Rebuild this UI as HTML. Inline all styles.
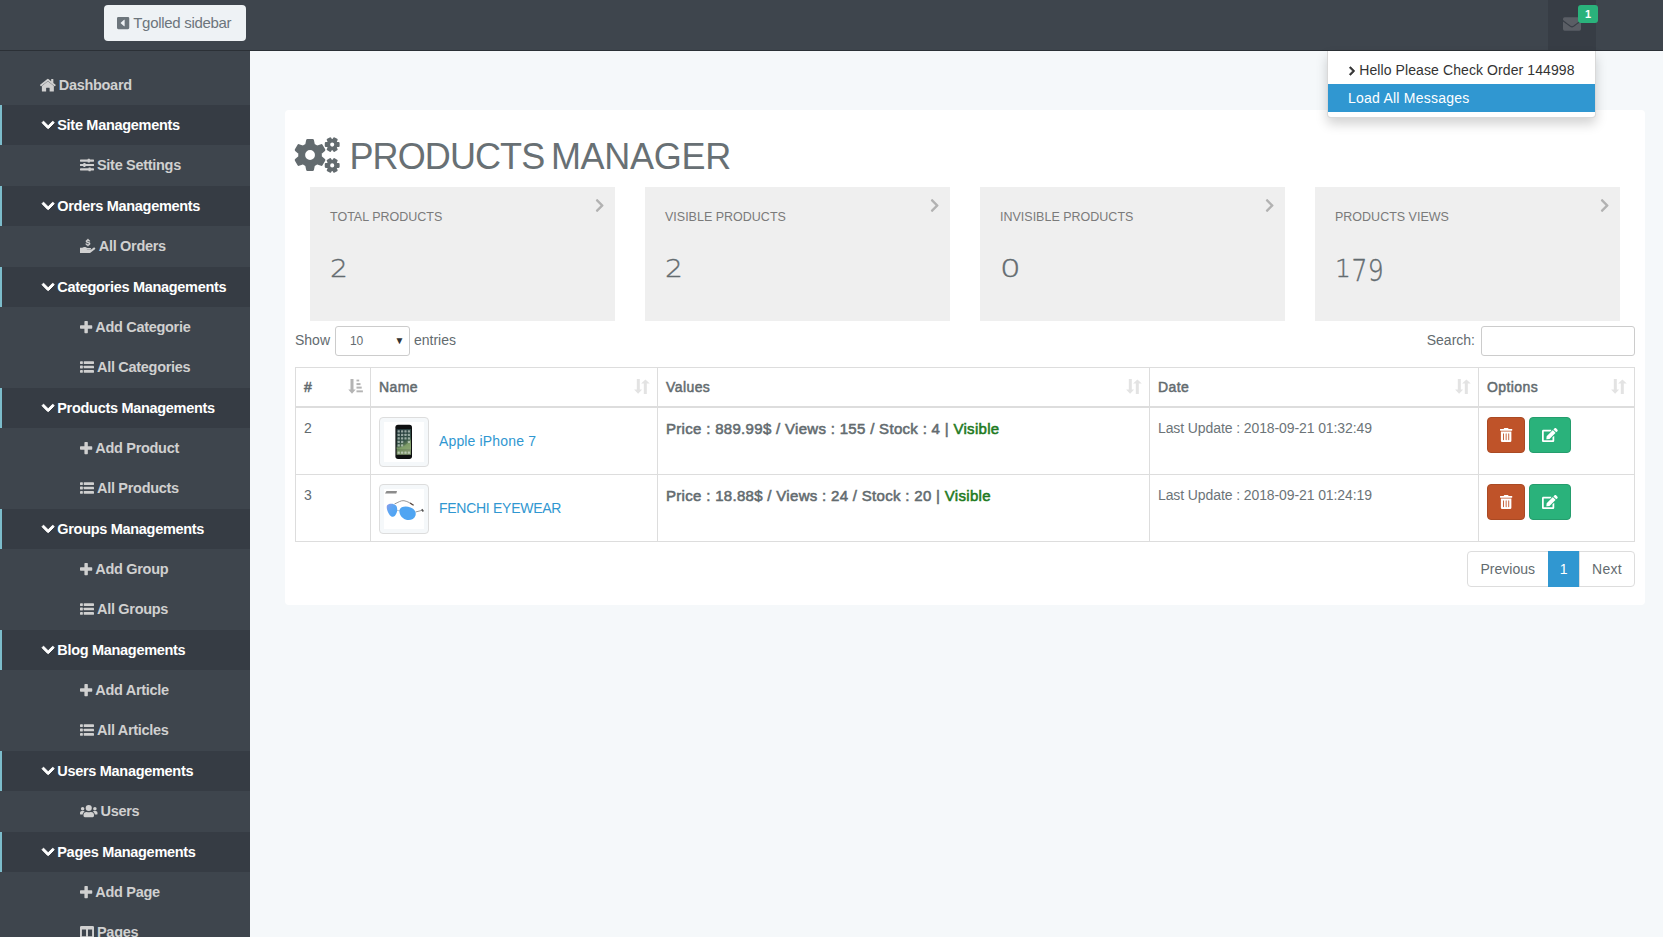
<!DOCTYPE html>
<html lang="en">
<head>
<meta charset="utf-8">
<title>Products Manager</title>
<style>
*{box-sizing:border-box}
html,body{margin:0;padding:0}
body{width:1663px;height:937px;overflow:hidden;background:#f5f8fa;color:#636b6f;font-family:"Liberation Sans",sans-serif;font-size:14px;line-height:22.4px;position:relative}
svg.ic{fill:currentColor;display:inline-block;vertical-align:-2px;overflow:visible}
a{text-decoration:none;color:inherit}
/* navbar */
.nav{position:absolute;left:0;top:0;width:1663px;height:51px;background:#3e454d;border-bottom:1px solid #2b3036}
.tg{position:absolute;left:104px;top:5px;width:142px;height:36px;background:#eef2f5;border-radius:4px;color:#6c757c;font-size:15px;letter-spacing:-.3px;line-height:36px;padding-left:13px;white-space:nowrap}
.tg svg{vertical-align:-2px;margin-right:4px}
.msg{position:absolute;left:1548px;top:0;width:48px;height:50px;background:#373d45}
.msg svg{position:absolute;left:15px;top:14.600px;color:#5a5e65}
.badge{position:absolute;left:1578px;top:5px;width:20px;height:18px;border-radius:3px;background:#2ab27b;color:#fff;font-weight:bold;font-size:11px;line-height:18px;text-align:center}
/* dropdown */
.dd{position:absolute;left:1327px;top:51px;width:269px;height:66.500px;background:#fff;border:1px solid rgba(0,0,0,.15);border-top:0;border-radius:0 0 4px 4px;box-shadow:0 6px 12px rgba(0,0,0,.175);padding-top:5px}
.dd div{height:28px;line-height:28px;padding-left:20px;white-space:nowrap;color:#333}
.dd div.act{background:#3097d1;color:#fff;letter-spacing:.23px;height:27.500px;line-height:29.500px}
.dd div svg{margin-right:4.600px;vertical-align:-.5px;margin-left:.5px}
.dd .m1{letter-spacing:.09px}
/* sidebar */
.side{position:absolute;left:0;top:51px;width:250px;height:886px;background:#3e454d;overflow:hidden}
ul{list-style:none;margin:0;padding:0}
.sb{margin-top:14px}
.sb a{display:block;height:40px;line-height:40px;padding-left:40px;color:#d0d0d0;font-weight:bold;font-size:14.5px;letter-spacing:-.3px;white-space:nowrap}
.sb a svg{margin-right:3px}
.sb li.grp{margin-bottom:1px}
.sb a.hd{background:#363c44;color:#fff;border-left:2px solid #7cbccb;padding-left:40px}
.sb li.grp ul a{padding-left:80px}
/* panel */
.panel{position:absolute;left:285px;top:110px;width:1360px;height:495px;background:#fff;border-radius:4px}
h1{position:absolute;left:10px;top:27px;margin:0;padding-left:54.500px;word-spacing:-2.500px;font-size:36px;font-weight:normal;line-height:40px;letter-spacing:-.9px;color:#687074;white-space:nowrap}
h1 span{letter-spacing:-.3px}
h1 svg.ic{position:absolute;left:0;top:0px;color:#636b6f}
.rowc{position:absolute;left:10px;top:77px;width:1340px;height:134px}
.col{float:left;width:335px;padding:0 15px}
.card{position:relative;height:134px;background:#efefef;padding:18px 20px}
.lbl{font-size:12.5px;line-height:22px;color:#7a7a7a;position:relative;top:1px}
.num{font-family:"DejaVu Sans","Liberation Sans",sans-serif;font-weight:200;font-size:25px;line-height:30px;margin-top:27px;color:#636b6f;-webkit-text-stroke:.35px #636b6f;letter-spacing:.5px}
.num span{display:inline-block;position:relative}
.num .w{transform:scaleX(1.12);transform-origin:0 50%}
.num .z{transform:scaleX(1.3);transform-origin:0 50%}
.num .d{transform:scaleY(1.24);transform-origin:0 5.400px}
/* table controls */
.len{position:absolute;left:10px;top:216px;height:30px;line-height:28px;white-space:nowrap}
.sel{display:inline-block;vertical-align:top;width:75px;height:30px;border:1px solid #ccc;border-radius:3px;margin:0 4px 0 1px;font-size:12px;line-height:28px;padding-left:14px;position:relative;background:#fff}
.sel i{position:absolute;right:4.500px;top:0;font-style:normal;font-size:10px;color:#333}
.srch{position:absolute;right:10px;top:216px;height:30px;line-height:28px;white-space:nowrap}
.srch span{display:inline-block;vertical-align:top;width:154px;height:30px;border:1px solid #ccc;border-radius:3px;margin-left:6px;background:#fff}
table{position:absolute;left:10px;top:257px;width:1340px;border-collapse:separate;border-spacing:0;border:1px solid #ddd;border-width:1px 0 0 1px;table-layout:fixed}
th,td{border:1px solid #ddd;border-width:0 1px 1px 0;padding:8px;text-align:left;vertical-align:top;white-space:nowrap}
th{font-weight:normal;-webkit-text-stroke:.5px;letter-spacing:.42px;border-bottom-width:2px;height:40.400px;position:relative;padding-right:30px}
th .sort{position:absolute;right:7.500px;top:11.400px}
td{height:67px;line-height:23.500px;padding:9px 8px 7px}
.thumb{display:inline-block;width:50px;height:50px;border:1px solid #ddd;border-radius:4px;padding:4px;background:#f5f8fa;vertical-align:middle}
.thumb svg{display:block}
.plink{color:#3097d1;margin-left:10px;vertical-align:middle;position:relative;top:-.5px}
.ls1{letter-spacing:.15px}.ls2{letter-spacing:-.28px}
.c2 b{font-size:15px;font-weight:normal;-webkit-text-stroke:.55px;letter-spacing:.31px;position:relative;top:-.7px}
.vis{color:#1e7a1e}
.c3{letter-spacing:-.1px;color:#6c7478}
.btn{display:inline-block;height:36px;border-radius:4px;padding:6px 12px;color:#fff;border:1px solid;vertical-align:top}
.bd{background:#bf5329;border-color:#aa4a24;margin-right:4px}
.bs{background:#2ab27b;border-color:#259d6d}
.pg{position:absolute;right:10px;top:441px;height:36px;display:flex}
.pg span{display:block;height:36px;line-height:34px;padding:0;text-align:center;border:1px solid #ddd;margin-left:-1px;background:#fff}
.pg .p1{width:81.500px}.pg .p2{width:32.500px}.pg .p3{width:56px;letter-spacing:.3px}
.pg span:first-child{border-radius:4px 0 0 4px}
.pg span:last-child{border-radius:0 4px 4px 0}
.pg span.on{background:#3097d1;border-color:#3097d1;color:#fff}
</style>
</head>
<body>
<div class="side">
<ul class="sb">
<li class="top"><a><svg class="ic " viewBox="0 0 576 512" width="15.75" height="14" style="" aria-hidden="true"><path d="M288 115 L69 295 V480 a16 16 0 0 0 16 16 H224 V368 a16 16 0 0 1 16-16 h96 a16 16 0 0 1 16 16 V496 H491 a16 16 0 0 0 16-16 V295 Z"/><path d="M571 251 L488 183 V48 a12 12 0 0 0 -12-12 h-56 a12 12 0 0 0 -12 12 v69 L318 43 a48 48 0 0 0 -61 0 L4 251 a12 12 0 0 0 -2 17 l26 31 a12 12 0 0 0 17 2 L288 107 l243 194 a12 12 0 0 0 17-2 l26-31 a12 12 0 0 0 -3-17z"/></svg><span>Dashboard</span></a></li>
<li class="grp"><a class="hd"><svg class="ic " viewBox="0 0 448 512" width="12.25" height="14" style="" aria-hidden="true"><path stroke="currentColor" stroke-width="36" stroke-linejoin="round" d="M207.029 381.476L12.686 187.132c-9.373-9.373-9.373-24.569 0-33.941l22.667-22.667c9.357-9.357 24.522-9.375 33.901-.04L224 284.505l154.745-154.021c9.379-9.335 24.544-9.317 33.901.04l22.667 22.667c9.373 9.373 9.373 24.569 0 33.941L240.971 381.476c-9.373 9.372-24.569 9.372-33.942 0z"/></svg><span>Site Managements</span></a><ul>
<li><a><svg class="ic " viewBox="0 0 512 512" width="14" height="14" style="" aria-hidden="true"><rect x="0" y="56" width="512" height="80" rx="16"/><rect x="0" y="216" width="512" height="80" rx="16"/><rect x="0" y="376" width="512" height="80" rx="16"/><rect x="280" y="24" width="80" height="144" rx="16"/><rect x="120" y="184" width="80" height="144" rx="16"/><rect x="312" y="344" width="80" height="144" rx="16"/></svg><span>Site Settings</span></a></li>
</ul></li>
<li class="grp"><a class="hd"><svg class="ic " viewBox="0 0 448 512" width="12.25" height="14" style="" aria-hidden="true"><path stroke="currentColor" stroke-width="36" stroke-linejoin="round" d="M207.029 381.476L12.686 187.132c-9.373-9.373-9.373-24.569 0-33.941l22.667-22.667c9.357-9.357 24.522-9.375 33.901-.04L224 284.505l154.745-154.021c9.379-9.335 24.544-9.317 33.901.04l22.667 22.667c9.373 9.373 9.373 24.569 0 33.941L240.971 381.476c-9.373 9.372-24.569 9.372-33.942 0z"/></svg><span>Orders Managements</span></a><ul>
<li><a><svg class="ic " viewBox="0 0 576 512" width="15.75" height="14" style="" aria-hidden="true"><path d="M0 322 h84 c44-32 104-32 146-8 l44 12 h104 c40 0 40 58 0 58 h-124 l-8 12 h150 l106-82 c40-26 78 28 44 58 L404 480 c-24 22-46 32-78 32 H0z"/><path stroke="currentColor" stroke-width="14" d="M272 0 h36 v28 c34 4 54 24 58 54 h-40 c-4-14-16-20-36-20 c-20 0-30 8-30 20 c0 12 10 16 40 24 c44 10 72 24 72 64 c0 32-24 54-64 60 v30 h-36 v-30 c-38-4-62-26-66-60 h40 c4 18 20 26 44 26 c24 0 38-8 38-24 c0-14-12-20-44-28 c-44-10-68-26-68-62 c0-30 24-50 56-56z"/></svg><span>All Orders</span></a></li>
</ul></li>
<li class="grp"><a class="hd"><svg class="ic " viewBox="0 0 448 512" width="12.25" height="14" style="" aria-hidden="true"><path stroke="currentColor" stroke-width="36" stroke-linejoin="round" d="M207.029 381.476L12.686 187.132c-9.373-9.373-9.373-24.569 0-33.941l22.667-22.667c9.357-9.357 24.522-9.375 33.901-.04L224 284.505l154.745-154.021c9.379-9.335 24.544-9.317 33.901.04l22.667 22.667c9.373 9.373 9.373 24.569 0 33.941L240.971 381.476c-9.373 9.372-24.569 9.372-33.942 0z"/></svg><span>Categories Managements</span></a><ul>
<li><a><svg class="ic " viewBox="0 0 448 512" width="12.25" height="14" style="" aria-hidden="true"><path d="M448 294.2v-76.4c0-13.3-10.7-24-24-24H286.2V56c0-13.3-10.7-24-24-24h-76.4c-13.3 0-24 10.7-24 24v137.8H24c-13.3 0-24 10.7-24 24v76.4c0 13.3 10.7 24 24 24h137.8V456c0 13.3 10.7 24 24 24h76.4c13.3 0 24-10.7 24-24V318.2H424c13.3 0 24-10.7 24-24z"/></svg><span>Add Categorie</span></a></li>
<li><a><svg class="ic " viewBox="0 0 512 512" width="14" height="14" style="" aria-hidden="true"><rect x="0" y="44" width="104" height="104" rx="16"/><rect x="136" y="48" width="376" height="96" rx="16"/><rect x="0" y="204" width="104" height="104" rx="16"/><rect x="136" y="208" width="376" height="96" rx="16"/><rect x="0" y="364" width="104" height="104" rx="16"/><rect x="136" y="368" width="376" height="96" rx="16"/></svg><span>All Categories</span></a></li>
</ul></li>
<li class="grp"><a class="hd"><svg class="ic " viewBox="0 0 448 512" width="12.25" height="14" style="" aria-hidden="true"><path stroke="currentColor" stroke-width="36" stroke-linejoin="round" d="M207.029 381.476L12.686 187.132c-9.373-9.373-9.373-24.569 0-33.941l22.667-22.667c9.357-9.357 24.522-9.375 33.901-.04L224 284.505l154.745-154.021c9.379-9.335 24.544-9.317 33.901.04l22.667 22.667c9.373 9.373 9.373 24.569 0 33.941L240.971 381.476c-9.373 9.372-24.569 9.372-33.942 0z"/></svg><span>Products Managements</span></a><ul>
<li><a><svg class="ic " viewBox="0 0 448 512" width="12.25" height="14" style="" aria-hidden="true"><path d="M448 294.2v-76.4c0-13.3-10.7-24-24-24H286.2V56c0-13.3-10.7-24-24-24h-76.4c-13.3 0-24 10.7-24 24v137.8H24c-13.3 0-24 10.7-24 24v76.4c0 13.3 10.7 24 24 24h137.8V456c0 13.3 10.7 24 24 24h76.4c13.3 0 24-10.7 24-24V318.2H424c13.3 0 24-10.7 24-24z"/></svg><span>Add Product</span></a></li>
<li><a><svg class="ic " viewBox="0 0 512 512" width="14" height="14" style="" aria-hidden="true"><rect x="0" y="44" width="104" height="104" rx="16"/><rect x="136" y="48" width="376" height="96" rx="16"/><rect x="0" y="204" width="104" height="104" rx="16"/><rect x="136" y="208" width="376" height="96" rx="16"/><rect x="0" y="364" width="104" height="104" rx="16"/><rect x="136" y="368" width="376" height="96" rx="16"/></svg><span>All Products</span></a></li>
</ul></li>
<li class="grp"><a class="hd"><svg class="ic " viewBox="0 0 448 512" width="12.25" height="14" style="" aria-hidden="true"><path stroke="currentColor" stroke-width="36" stroke-linejoin="round" d="M207.029 381.476L12.686 187.132c-9.373-9.373-9.373-24.569 0-33.941l22.667-22.667c9.357-9.357 24.522-9.375 33.901-.04L224 284.505l154.745-154.021c9.379-9.335 24.544-9.317 33.901.04l22.667 22.667c9.373 9.373 9.373 24.569 0 33.941L240.971 381.476c-9.373 9.372-24.569 9.372-33.942 0z"/></svg><span>Groups Managements</span></a><ul>
<li><a><svg class="ic " viewBox="0 0 448 512" width="12.25" height="14" style="" aria-hidden="true"><path d="M448 294.2v-76.4c0-13.3-10.7-24-24-24H286.2V56c0-13.3-10.7-24-24-24h-76.4c-13.3 0-24 10.7-24 24v137.8H24c-13.3 0-24 10.7-24 24v76.4c0 13.3 10.7 24 24 24h137.8V456c0 13.3 10.7 24 24 24h76.4c13.3 0 24-10.7 24-24V318.2H424c13.3 0 24-10.7 24-24z"/></svg><span>Add Group</span></a></li>
<li><a><svg class="ic " viewBox="0 0 512 512" width="14" height="14" style="" aria-hidden="true"><rect x="0" y="44" width="104" height="104" rx="16"/><rect x="136" y="48" width="376" height="96" rx="16"/><rect x="0" y="204" width="104" height="104" rx="16"/><rect x="136" y="208" width="376" height="96" rx="16"/><rect x="0" y="364" width="104" height="104" rx="16"/><rect x="136" y="368" width="376" height="96" rx="16"/></svg><span>All Groups</span></a></li>
</ul></li>
<li class="grp"><a class="hd"><svg class="ic " viewBox="0 0 448 512" width="12.25" height="14" style="" aria-hidden="true"><path stroke="currentColor" stroke-width="36" stroke-linejoin="round" d="M207.029 381.476L12.686 187.132c-9.373-9.373-9.373-24.569 0-33.941l22.667-22.667c9.357-9.357 24.522-9.375 33.901-.04L224 284.505l154.745-154.021c9.379-9.335 24.544-9.317 33.901.04l22.667 22.667c9.373 9.373 9.373 24.569 0 33.941L240.971 381.476c-9.373 9.372-24.569 9.372-33.942 0z"/></svg><span>Blog Managements</span></a><ul>
<li><a><svg class="ic " viewBox="0 0 448 512" width="12.25" height="14" style="" aria-hidden="true"><path d="M448 294.2v-76.4c0-13.3-10.7-24-24-24H286.2V56c0-13.3-10.7-24-24-24h-76.4c-13.3 0-24 10.7-24 24v137.8H24c-13.3 0-24 10.7-24 24v76.4c0 13.3 10.7 24 24 24h137.8V456c0 13.3 10.7 24 24 24h76.4c13.3 0 24-10.7 24-24V318.2H424c13.3 0 24-10.7 24-24z"/></svg><span>Add Article</span></a></li>
<li><a><svg class="ic " viewBox="0 0 512 512" width="14" height="14" style="" aria-hidden="true"><rect x="0" y="44" width="104" height="104" rx="16"/><rect x="136" y="48" width="376" height="96" rx="16"/><rect x="0" y="204" width="104" height="104" rx="16"/><rect x="136" y="208" width="376" height="96" rx="16"/><rect x="0" y="364" width="104" height="104" rx="16"/><rect x="136" y="368" width="376" height="96" rx="16"/></svg><span>All Articles</span></a></li>
</ul></li>
<li class="grp"><a class="hd"><svg class="ic " viewBox="0 0 448 512" width="12.25" height="14" style="" aria-hidden="true"><path stroke="currentColor" stroke-width="36" stroke-linejoin="round" d="M207.029 381.476L12.686 187.132c-9.373-9.373-9.373-24.569 0-33.941l22.667-22.667c9.357-9.357 24.522-9.375 33.901-.04L224 284.505l154.745-154.021c9.379-9.335 24.544-9.317 33.901.04l22.667 22.667c9.373 9.373 9.373 24.569 0 33.941L240.971 381.476c-9.373 9.372-24.569 9.372-33.942 0z"/></svg><span>Users Managements</span></a><ul>
<li><a><svg class="ic " viewBox="0 0 640 512" width="17.5" height="14" style="" aria-hidden="true"><circle cx="96" cy="176" r="64"/><circle cx="544" cy="176" r="64"/><circle cx="320" cy="144" r="112"/><path d="M0 320 a64 64 0 0 1 64-64 h64 a64 64 0 0 1 45 19 c-40 22-69 62-75 109 H32 a32 32 0 0 1 -32-32z"/><path d="M640 320 a64 64 0 0 0 -64-64 h-64 a64 64 0 0 0 -45 19 c40 22 69 62 75 109 H608 a32 32 0 0 0 32-32z"/><path d="M128 403 a115 115 0 0 1 115-115 h8 a160 160 0 0 0 138 0 h8 a115 115 0 0 1 115 115 V432 a48 48 0 0 1 -48 48 H176 a48 48 0 0 1 -48-48z"/></svg><span>Users</span></a></li>
</ul></li>
<li class="grp"><a class="hd"><svg class="ic " viewBox="0 0 448 512" width="12.25" height="14" style="" aria-hidden="true"><path stroke="currentColor" stroke-width="36" stroke-linejoin="round" d="M207.029 381.476L12.686 187.132c-9.373-9.373-9.373-24.569 0-33.941l22.667-22.667c9.357-9.357 24.522-9.375 33.901-.04L224 284.505l154.745-154.021c9.379-9.335 24.544-9.317 33.901.04l22.667 22.667c9.373 9.373 9.373 24.569 0 33.941L240.971 381.476c-9.373 9.372-24.569 9.372-33.942 0z"/></svg><span>Pages Managements</span></a><ul>
<li><a><svg class="ic " viewBox="0 0 448 512" width="12.25" height="14" style="" aria-hidden="true"><path d="M448 294.2v-76.4c0-13.3-10.7-24-24-24H286.2V56c0-13.3-10.7-24-24-24h-76.4c-13.3 0-24 10.7-24 24v137.8H24c-13.3 0-24 10.7-24 24v76.4c0 13.3 10.7 24 24 24h137.8V456c0 13.3 10.7 24 24 24h76.4c13.3 0 24-10.7 24-24V318.2H424c13.3 0 24-10.7 24-24z"/></svg><span>Add Page</span></a></li>
<li><a><svg class="ic " viewBox="0 0 512 512" width="14" height="14" style="" aria-hidden="true"><path fill-rule="evenodd" d="M464 32 H48 A48 48 0 0 0 0 80 v352 a48 48 0 0 0 48 48 h416 a48 48 0 0 0 48-48 V80 a48 48 0 0 0 -48-48z M220 412 H70 V166 h150z M442 412 H292 V166 h150z"/></svg><span>Pages</span></a></li>
</ul></li>
</ul>
</div>
<div class="panel">
<h1><svg class="ic " viewBox="0 0 640 512" width="45" height="36" style="" aria-hidden="true"><path fill-rule="evenodd" stroke-linejoin="round" stroke-width="36" stroke="currentColor" d="M265.5 399.0 L251.5 464.6 L176.5 464.6 L162.5 399.0 L115.9 372.1 L52.1 392.8 L14.5 327.8 L64.4 282.9 L64.4 229.1 L14.5 184.2 L52.1 119.2 L115.9 139.9 L162.5 113.0 L176.5 47.4 L251.5 47.4 L265.5 113.0 L312.1 139.9 L375.9 119.2 L413.5 184.2 L363.6 229.1 L363.6 282.9 L413.5 327.8 L375.9 392.8 L312.1 372.1Z M126.0 256.0 a88 88 0 1 0 176 0 a88 88 0 1 0 -176 0Z"/><path fill-rule="evenodd" stroke-linejoin="round" stroke-width="30" stroke="currentColor" d="M590.6 87.3 L619.8 87.7 L619.8 128.3 L590.6 128.7 L577.8 151.0 L591.9 176.5 L556.8 196.7 L541.8 171.7 L516.2 171.7 L501.2 196.7 L466.1 176.5 L480.2 151.0 L467.4 128.7 L438.2 128.3 L438.2 87.7 L467.4 87.3 L480.2 65.0 L466.1 39.5 L501.2 19.3 L516.2 44.3 L541.8 44.3 L556.8 19.3 L591.9 39.5 L577.8 65.0Z M485.0 108.0 a44 44 0 1 0 88 0 a44 44 0 1 0 -88 0Z M590.6 383.3 L619.8 383.7 L619.8 424.3 L590.6 424.7 L577.8 447.0 L591.9 472.5 L556.8 492.7 L541.8 467.7 L516.2 467.7 L501.2 492.7 L466.1 472.5 L480.2 447.0 L467.4 424.7 L438.2 424.3 L438.2 383.7 L467.4 383.3 L480.2 361.0 L466.1 335.5 L501.2 315.3 L516.2 340.3 L541.8 340.3 L556.8 315.3 L591.9 335.5 L577.8 361.0Z M485.0 404.0 a44 44 0 1 0 88 0 a44 44 0 1 0 -88 0Z"/></svg>PRODUCTS <span>MANAGER</span></h1>
<div class="rowc"><div class="col"><div class="card"><svg class="ic " viewBox="0 0 320 512" width="9.4" height="15" style="position:absolute;right:10.5px;top:10.5px;color:#b2b2b2" aria-hidden="true"><path d="M285.476 272.971L91.132 467.314c-9.373 9.373-24.569 9.373-33.941 0l-22.667-22.667c-9.357-9.357-9.375-24.522-.04-33.901L188.505 256 34.484 101.255c-9.335-9.379-9.317-24.544.04-33.901l22.667-22.667c9.373-9.373 24.569-9.373 33.941 0L285.475 239.03c9.373 9.372 9.373 24.568.001 33.941z"/></svg><div class="lbl">TOTAL PRODUCTS</div><div class="num"><span class="w">2</span></div></div></div><div class="col"><div class="card"><svg class="ic " viewBox="0 0 320 512" width="9.4" height="15" style="position:absolute;right:10.5px;top:10.5px;color:#b2b2b2" aria-hidden="true"><path d="M285.476 272.971L91.132 467.314c-9.373 9.373-24.569 9.373-33.941 0l-22.667-22.667c-9.357-9.357-9.375-24.522-.04-33.901L188.505 256 34.484 101.255c-9.335-9.379-9.317-24.544.04-33.901l22.667-22.667c9.373-9.373 24.569-9.373 33.941 0L285.475 239.03c9.373 9.372 9.373 24.568.001 33.941z"/></svg><div class="lbl">VISIBLE PRODUCTS</div><div class="num"><span class="w">2</span></div></div></div><div class="col"><div class="card"><svg class="ic " viewBox="0 0 320 512" width="9.4" height="15" style="position:absolute;right:10.5px;top:10.5px;color:#b2b2b2" aria-hidden="true"><path d="M285.476 272.971L91.132 467.314c-9.373 9.373-24.569 9.373-33.941 0l-22.667-22.667c-9.357-9.357-9.375-24.522-.04-33.901L188.505 256 34.484 101.255c-9.335-9.379-9.317-24.544.04-33.901l22.667-22.667c9.373-9.373 24.569-9.373 33.941 0L285.475 239.03c9.373 9.372 9.373 24.568.001 33.941z"/></svg><div class="lbl">INVISIBLE PRODUCTS</div><div class="num"><span class="z">0</span></div></div></div><div class="col"><div class="card"><svg class="ic " viewBox="0 0 320 512" width="9.4" height="15" style="position:absolute;right:10.5px;top:10.5px;color:#b2b2b2" aria-hidden="true"><path d="M285.476 272.971L91.132 467.314c-9.373 9.373-24.569 9.373-33.941 0l-22.667-22.667c-9.357-9.357-9.375-24.522-.04-33.901L188.505 256 34.484 101.255c-9.335-9.379-9.317-24.544.04-33.901l22.667-22.667c9.373-9.373 24.569-9.373 33.941 0L285.475 239.03c9.373 9.372 9.373 24.568.001 33.941z"/></svg><div class="lbl">PRODUCTS VIEWS</div><div class="num">1<span class="d">79</span></div></div></div></div>
<div class="len">Show <span class="sel">10<i>&#9660;</i></span>entries</div>
<div class="srch">Search:<span></span></div>
<table>
<colgroup><col style="width:75px"><col style="width:287px"><col style="width:492px"><col style="width:329px"><col style="width:156px"></colgroup>
<thead><tr><th>#<svg class="sort" viewBox="0 0 15 15" width="15" height="15" style="fill:#b4b4b4"><rect x="2.500" y="0" width="3" height="11.600"/><path d="M0.300 10.600 H7.700 L4 14.800Z"/><rect x="8.500" y="0.600" width="2.700" height="1.800"/><rect x="8.500" y="4.100" width="4" height="2"/><rect x="8.500" y="7.600" width="5.200" height="2"/><rect x="8.500" y="11.400" width="6.400" height="1.900"/></svg></th><th>Name<svg class="sort" viewBox="0 0 16 15" width="16" height="15" style="fill:#e3e3e3;right:7px"><rect x="2.800" y="0" width="3" height="11.600"/><path d="M0.1 10.600 H8.100 L4.100 14.800Z"/><rect x="9.800" y="3.600" width="3" height="11.400"/><path d="M7.100 4.600 H15.800 L11.400 0.400Z"/></svg></th><th>Values<svg class="sort" viewBox="0 0 16 15" width="16" height="15" style="fill:#e3e3e3;right:7px"><rect x="2.800" y="0" width="3" height="11.600"/><path d="M0.1 10.600 H8.100 L4.100 14.800Z"/><rect x="9.800" y="3.600" width="3" height="11.400"/><path d="M7.100 4.600 H15.800 L11.400 0.400Z"/></svg></th><th>Date<svg class="sort" viewBox="0 0 16 15" width="16" height="15" style="fill:#e3e3e3;right:7px"><rect x="2.800" y="0" width="3" height="11.600"/><path d="M0.1 10.600 H8.100 L4.100 14.800Z"/><rect x="9.800" y="3.600" width="3" height="11.400"/><path d="M7.100 4.600 H15.800 L11.400 0.400Z"/></svg></th><th>Options<svg class="sort" viewBox="0 0 16 15" width="16" height="15" style="fill:#e3e3e3;right:7px"><rect x="2.800" y="0" width="3" height="11.600"/><path d="M0.1 10.600 H8.100 L4.100 14.800Z"/><rect x="9.800" y="3.600" width="3" height="11.400"/><path d="M7.100 4.600 H15.800 L11.400 0.400Z"/></svg></th></tr></thead>
<tbody>
<tr><td class="c0">2</td><td class="c1"><span class="thumb"><svg width="40" height="40" viewBox="0 0 40 40"><defs><linearGradient id="scr" x1="0" y1="0" x2="0.300" y2="1"><stop offset="0" stop-color="#22353b"/><stop offset=".55" stop-color="#355248"/><stop offset=".8" stop-color="#6f8c5c"/><stop offset="1" stop-color="#7f946c"/></linearGradient></defs><rect width="40" height="40" fill="#fff"/><rect x="11.400" y="2.700" width="16.600" height="34.200" rx="2.600" fill="#0e1011"/><rect x="12.600" y="7" width="14.400" height="25.800" fill="url(#scr)"/><path d="M12.600 25 C17 27 22 23 27 17.500 V27 H12.600Z" fill="#9ab87c" opacity=".45"/><g fill="#dfe9e2" opacity=".6"><rect x="13.6" y="8.2" width="2.200" height="2.200" rx=".5"/><rect x="17.0" y="8.2" width="2.200" height="2.200" rx=".5"/><rect x="20.4" y="8.2" width="2.200" height="2.200" rx=".5"/><rect x="23.8" y="8.2" width="2.200" height="2.200" rx=".5"/><rect x="13.6" y="11.7" width="2.200" height="2.200" rx=".5"/><rect x="17.0" y="11.7" width="2.200" height="2.200" rx=".5"/><rect x="20.4" y="11.7" width="2.200" height="2.200" rx=".5"/><rect x="23.8" y="11.7" width="2.200" height="2.200" rx=".5"/><rect x="13.6" y="15.2" width="2.200" height="2.200" rx=".5"/><rect x="17.0" y="15.2" width="2.200" height="2.200" rx=".5"/><rect x="20.4" y="15.2" width="2.200" height="2.200" rx=".5"/><rect x="23.8" y="15.2" width="2.200" height="2.200" rx=".5"/><rect x="13.6" y="18.7" width="2.200" height="2.200" rx=".5"/><rect x="17.0" y="18.7" width="2.200" height="2.200" rx=".5"/><rect x="23.8" y="18.7" width="2.200" height="2.200" rx=".5"/><rect x="13.6" y="22.2" width="2.200" height="2.200" rx=".5"/><rect x="17.0" y="22.2" width="2.200" height="2.200" rx=".5"/><rect x="13.6" y="29.600" width="2.200" height="2.200" rx=".5"/><rect x="17.0" y="29.600" width="2.200" height="2.200" rx=".5"/><rect x="20.4" y="29.600" width="2.200" height="2.200" rx=".5"/><rect x="23.8" y="29.600" width="2.200" height="2.200" rx=".5"/></g></svg></span><a class="plink ls1">Apple iPhone 7</a></td>
<td class="c2"><b>Price : 889.99$ / Views : 155 / Stock : 4 | </b><b class="vis">Visible</b></td><td class="c3">Last Update : 2018-09-21 01:32:49</td>
<td class="c4"><a class="btn bd"><svg class="ic " viewBox="0 0 448 512" width="12.25" height="14" style="" aria-hidden="true"><path fill-rule="evenodd" d="M32 464 a48 48 0 0 0 48 48 h288 a48 48 0 0 0 48-48 V128 H32z M304 208 a16 16 0 0 1 32 0 v224 a16 16 0 0 1 -32 0z M208 208 a16 16 0 0 1 32 0 v224 a16 16 0 0 1 -32 0z M112 208 a16 16 0 0 1 32 0 v224 a16 16 0 0 1 -32 0z"/><path d="M432 32 H312 l-9-19 A24 24 0 0 0 281 0 H167 a24 24 0 0 0 -22 13 l-9 19 H16 A16 16 0 0 0 0 48 v32 a16 16 0 0 0 16 16 h416 a16 16 0 0 0 16-16 V48 a16 16 0 0 0 -16-16z"/></svg></a><a class="btn bs"><svg class="ic " viewBox="0 0 576 512" width="15.75" height="14" style="" aria-hidden="true"><path d="M402.600 83.200 l90.200 90.200 c3.800 3.800 3.800 10 0 13.800 L274.400 405.600 l-92.800 10.300 c-12.400 1.400-22.900-9.100-21.500-21.500 l10.300-92.800 L388.800 83.200 c3.800-3.800 10-3.800 13.800 0z"/><path d="M564.600 60.200 l-48.800-48.800 c-15.200-15.200-39.900-15.200-55.200 0 l-35.400 35.400 c-3.800 3.800-3.800 10 0 13.800 l90.200 90.200 c3.800 3.800 10 3.800 13.800 0 l35.400-35.400 c15.200-15.300 15.200-40 0-55.200z"/><path d="M384 346.200 V448 H64 V128 h229.800 c3.200 0 6.200-1.300 8.500-3.500 l40-40 c7.600-7.600 2.200-20.500-8.500-20.500 H48 C21.500 64 0 85.500 0 112 v352 c0 26.500 21.500 48 48 48 h352 c26.500 0 48-21.500 48-48 V306.200 c0-10.700-12.900-16-20.500-8.500 l-40 40 c-2.200 2.300-3.500 5.300-3.500 8.500z"/></svg></a></td></tr><tr><td class="c0">3</td><td class="c1"><span class="thumb"><svg width="40" height="40" viewBox="0 0 40 40"><defs><linearGradient id="ln" x1="0" y1="0" x2="1" y2="1"><stop offset="0" stop-color="#8f9be8"/><stop offset=".4" stop-color="#5ea6f3"/><stop offset="1" stop-color="#49a3f2"/></linearGradient></defs><rect width="40" height="40" fill="#fff"/><path d="M1 4.600 L2.500 2 H13 L12.300 4.600Z" fill="#666" opacity=".75"/><path d="M10.500 15 C14 13.500 17 11.200 20 11.700 C24 12.500 27 14.500 29.500 16.200" fill="none" stroke="#8b8b8b" stroke-width=".9"/><path d="M26 14 L29.500 16.300" stroke="#5b4a42" stroke-width="1.300"/><path d="M13 21.500 L16 21.800" stroke="#aaa" stroke-width=".7"/><path d="M31.500 23 L38.500 21.200" stroke="#999" stroke-width="1"/><path d="M37.800 20.200 L39.300 22.500" stroke="#555" stroke-width="1.600"/><path d="M3 16.500 C4.500 14 9.500 14 12 16.500 C14 19 13.500 24 11 26.800 C9 29 6.500 27.500 5 25 C3.200 22 2.200 18.500 3 16.500Z" fill="url(#ln)"/><path d="M15.500 21 C16.500 17.500 22 16.800 26.500 18.500 C30.500 20 32.500 23 31.500 26.500 C30.300 30.500 25.500 32 21.500 30.500 C17.500 29 14.800 25 15.500 21Z" fill="#4fa5f2"/></svg></span><a class="plink ls2">FENCHI EYEWEAR</a></td>
<td class="c2"><b>Price : 18.88$ / Views : 24 / Stock : 20 | </b><b class="vis">Visible</b></td><td class="c3">Last Update : 2018-09-21 01:24:19</td>
<td class="c4"><a class="btn bd"><svg class="ic " viewBox="0 0 448 512" width="12.25" height="14" style="" aria-hidden="true"><path fill-rule="evenodd" d="M32 464 a48 48 0 0 0 48 48 h288 a48 48 0 0 0 48-48 V128 H32z M304 208 a16 16 0 0 1 32 0 v224 a16 16 0 0 1 -32 0z M208 208 a16 16 0 0 1 32 0 v224 a16 16 0 0 1 -32 0z M112 208 a16 16 0 0 1 32 0 v224 a16 16 0 0 1 -32 0z"/><path d="M432 32 H312 l-9-19 A24 24 0 0 0 281 0 H167 a24 24 0 0 0 -22 13 l-9 19 H16 A16 16 0 0 0 0 48 v32 a16 16 0 0 0 16 16 h416 a16 16 0 0 0 16-16 V48 a16 16 0 0 0 -16-16z"/></svg></a><a class="btn bs"><svg class="ic " viewBox="0 0 576 512" width="15.75" height="14" style="" aria-hidden="true"><path d="M402.600 83.200 l90.200 90.200 c3.800 3.800 3.800 10 0 13.800 L274.400 405.600 l-92.800 10.300 c-12.400 1.400-22.900-9.100-21.500-21.500 l10.300-92.800 L388.800 83.200 c3.800-3.800 10-3.800 13.800 0z"/><path d="M564.600 60.200 l-48.800-48.800 c-15.200-15.200-39.900-15.200-55.200 0 l-35.400 35.400 c-3.800 3.800-3.800 10 0 13.800 l90.200 90.200 c3.800 3.800 10 3.800 13.800 0 l35.400-35.400 c15.200-15.300 15.200-40 0-55.200z"/><path d="M384 346.200 V448 H64 V128 h229.800 c3.200 0 6.200-1.300 8.500-3.500 l40-40 c7.600-7.600 2.200-20.500-8.500-20.500 H48 C21.500 64 0 85.500 0 112 v352 c0 26.500 21.500 48 48 48 h352 c26.500 0 48-21.500 48-48 V306.200 c0-10.700-12.900-16-20.500-8.500 l-40 40 c-2.200 2.300-3.500 5.300-3.500 8.500z"/></svg></a></td></tr>
</tbody>
</table>
<div class="pg"><span class="p1">Previous</span><span class="on p2">1</span><span class="p3">Next</span></div>
</div>
<div class="nav">
<a class="tg"><svg class="ic " viewBox="0 0 448 512" width="12.25" height="14" style="" aria-hidden="true"><path fill-rule="evenodd" d="M400 480 H48 a48 48 0 0 1 -48-48 V80 a48 48 0 0 1 48-48 h352 a48 48 0 0 1 48 48 v352 a48 48 0 0 1 -48 48z M260 141 L137 248 c-5 4-5 12 0 17 l123 107 c8 7 20 1 20-9 V149 c0-10-12-15-20-8z"/></svg>Tgolled sidebar</a>
<div class="msg"><svg class="ic " viewBox="0 0 512 512" width="18" height="18" style="" aria-hidden="true"><path d="M502 191 c4-3 10 0 10 5 v204 a48 48 0 0 1 -48 48 H48 a48 48 0 0 1 -48-48 V196 c0-5 6-8 10-5 c22 17 52 39 154 113 c21 15 57 48 92 48 c35 0 71-33 92-48 c102-74 132-96 154-113z"/><path d="M256 320 c23 0 57-29 73-41 c133-96 143-105 174-129 a24 24 0 0 0 9-19 V112 a48 48 0 0 0 -48-48 H48 a48 48 0 0 0 -48 48 v19 a24 24 0 0 0 9 19 c31 24 41 33 174 129 c17 12 50 41 73 41z"/></svg></div>
<div class="badge">1</div>
</div>
<div class="dd"><div class="m1"><svg class="ic " viewBox="0 0 320 512" width="6.2" height="10" style="" aria-hidden="true"><path stroke="currentColor" stroke-width="40" d="M285.476 272.971L91.132 467.314c-9.373 9.373-24.569 9.373-33.941 0l-22.667-22.667c-9.357-9.357-9.375-24.522-.04-33.901L188.505 256 34.484 101.255c-9.335-9.379-9.317-24.544.04-33.901l22.667-22.667c9.373-9.373 24.569-9.373 33.941 0L285.475 239.03c9.373 9.372 9.373 24.568.001 33.941z"/></svg>Hello Please Check Order 144998</div><div class="act">Load All Messages</div></div>
</body>
</html>
